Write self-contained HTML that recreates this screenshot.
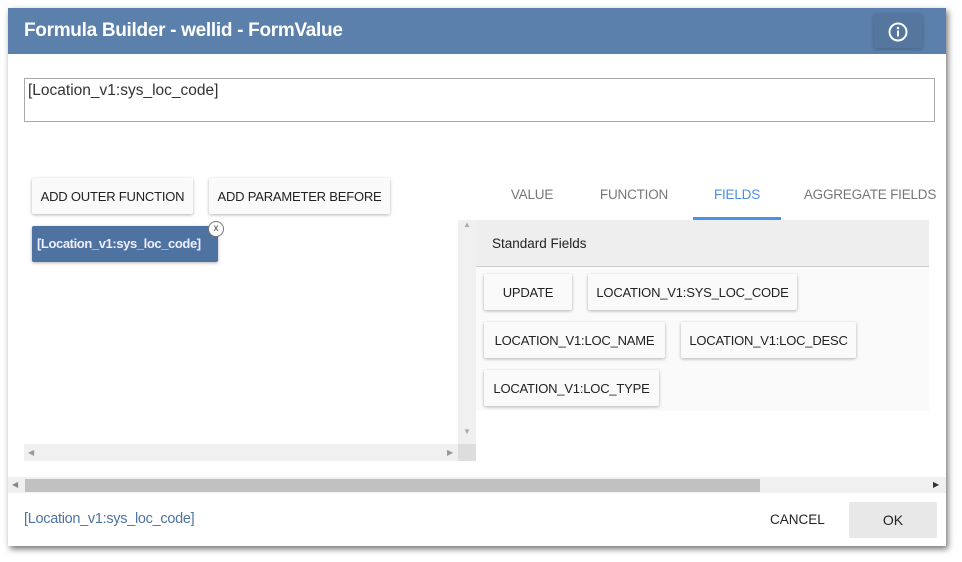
<!DOCTYPE html>
<html><head><style>
*{box-sizing:border-box;margin:0;padding:0}
body{width:962px;height:562px;background:#fff;font-family:"Liberation Sans",sans-serif;position:relative;overflow:hidden}
.a{position:absolute}
.dlg{left:8px;top:8px;width:938px;height:538px;background:#fff;box-shadow:2px 3px 6px rgba(0,0,0,.55)}
.hdr{left:8px;top:8px;width:938px;height:46px;background:#5b80ac;color:#fff;font-weight:bold;font-size:19px;padding:12px 16px;letter-spacing:-0.3px}
.btn{position:absolute;background:#fafafa;box-shadow:0 1px 3px rgba(0,0,0,.3);border-radius:2px;font-size:13px;color:#222;display:flex;align-items:center;justify-content:center;height:36px;white-space:nowrap;letter-spacing:-0.2px}
.tab{position:absolute;top:187px;font-size:13.5px;color:#777;transform:translateX(-50%);white-space:nowrap;letter-spacing:-0.2px}
</style></head><body>
<div class="a dlg"></div>
<div class="a hdr">Formula Builder - wellid - FormValue</div>
<div class="a" style="left:874px;top:14px;width:48px;height:34px;background:#54769f;box-shadow:0 1px 4px rgba(0,0,0,.25);border-radius:2px"></div>
<svg class="a" style="left:887px;top:21px" width="22" height="22" viewBox="0 0 22 22"><circle cx="11" cy="11" r="8.5" fill="none" stroke="#fff" stroke-width="2"/><circle cx="11" cy="7" r="1.3" fill="#fff"/><rect x="10" y="9.5" width="2" height="6" fill="#fff"/></svg>
<div class="a" style="left:24px;top:78px;width:911px;height:44px;border:1px solid #aaa;font-size:15.5px;color:#333;padding:3px 3px">[Location_v1:sys_loc_code]</div>
<div class="btn" style="left:32px;top:178px;width:161px">ADD OUTER FUNCTION</div>
<div class="btn" style="left:209px;top:178px;width:181px">ADD PARAMETER BEFORE</div>
<div class="a" style="left:32px;top:226px;width:186px;height:36px;background:#4f73a0;border-radius:2px;box-shadow:0 1px 3px rgba(0,0,0,.3);color:#eef;font-weight:bold;font-size:13px;padding:10px 5px;letter-spacing:-0.4px;white-space:nowrap">[Location_v1:sys_loc_code]</div>
<div class="a" style="left:208px;top:221px;width:16px;height:16px;border-radius:50%;background:#fff;border:1px solid #777;font-size:10px;text-align:center;line-height:14px;color:#444">x</div>
<div class="a" style="left:24px;top:444px;width:434px;height:17px;background:#f0f0f0;font-size:8px;color:#999;line-height:17px;padding-left:4px">◀<span style="position:absolute;left:423px">▶</span></div>
<div class="a" style="left:458px;top:220px;width:18px;height:241px;background:#f0f0f0;font-size:8px;color:#aaa;text-align:center">▲<div style="position:absolute;top:207px;width:18px">▼</div><div style="position:absolute;top:224px;width:18px;height:17px;background:#ddd"></div></div>
<div class="tab" style="left:532px">VALUE</div>
<div class="tab" style="left:634px">FUNCTION</div>
<div class="tab" style="left:737px;color:#4a8fe8">FIELDS</div>
<div class="tab" style="left:870px">AGGREGATE FIELDS</div>
<div class="a" style="left:693px;top:217px;width:88px;height:3px;background:#4a8fe8"></div>
<div class="a" style="left:476px;top:220px;width:453px;height:191px;background:#fafafa"></div>
<div class="a" style="left:476px;top:220px;width:453px;height:47px;background:#eee;border-bottom:1px solid #ccc;font-size:13.5px;color:#222;padding:16px 16px">Standard Fields</div>
<div class="btn" style="left:484px;top:274px;width:88px">UPDATE</div>
<div class="btn" style="left:588px;top:274px;width:209px">LOCATION_V1:SYS_LOC_CODE</div>
<div class="btn" style="left:484px;top:322px;width:181px">LOCATION_V1:LOC_NAME</div>
<div class="btn" style="left:681px;top:322px;width:175px">LOCATION_V1:LOC_DESC</div>
<div class="btn" style="left:484px;top:370px;width:175px">LOCATION_V1:LOC_TYPE</div>
<div class="a" style="left:8px;top:477px;width:938px;height:16px;background:#f0f0f0;font-size:8px;color:#888;line-height:16px;padding-left:4px">◀<span style="position:absolute;left:925px;color:#333">▶</span></div>
<div class="a" style="left:25px;top:479px;width:735px;height:13px;background:#c1c1c1"></div>
<div class="a" style="left:24px;top:511px;font-size:14.5px;color:#4f73a0;letter-spacing:-0.3px">[Location_v1:sys_loc_code]</div>
<div class="a" style="left:770px;top:512px;font-size:13.5px;color:#222">CANCEL</div>
<div class="a" style="left:849px;top:502px;width:88px;height:36px;background:#e8e8e8;border-radius:2px;font-size:14px;color:#222;text-align:center;line-height:36px">OK</div>
</body></html>
